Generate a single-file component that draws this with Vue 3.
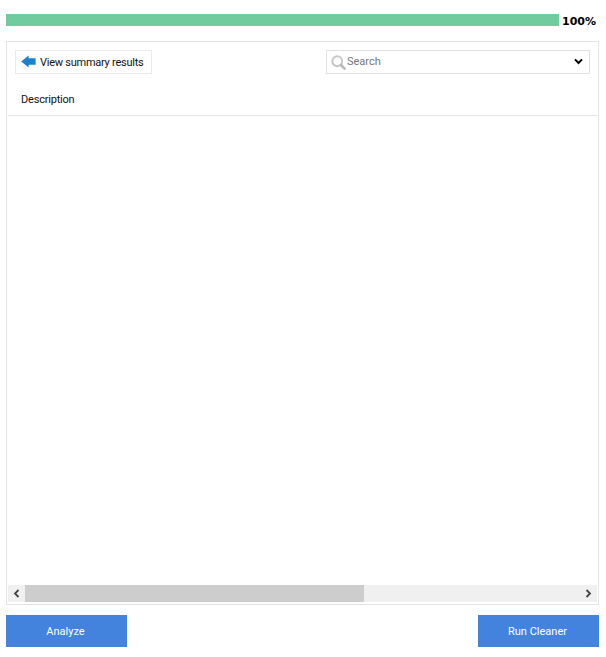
<script setup>
</script>

<template>
  <div class="page">
    <div class="progress-row">
      <div class="progress-bar"></div>
      <span class="progress-label">100%</span>
    </div>
    <div class="panel">
      <div class="toolbar">
        <button class="back-btn" type="button">
          <svg class="back-icon" width="15" height="13" viewBox="0 0 15 13">
            <path d="M0.2 6.5 L7.6 0.5 L7.6 3.2 L14.6 3.2 L14.6 9.8 L7.6 9.8 L7.6 12.5 Z" fill="#1b82cc" />
          </svg>
          <span>View summary results</span>
        </button>
        <div class="search">
          <svg class="search-icon" width="15" height="15" viewBox="0 0 15 15">
            <circle cx="6.2" cy="6.2" r="4.9" fill="none" stroke="#c8c8c8" stroke-width="2.1" />
            <path d="M10 10 L13.6 13.6" stroke="#b8b8b8" stroke-width="2.6" stroke-linecap="round" />
          </svg>
          <span class="search-text">Search</span>
          <svg class="chevron" width="9" height="7" viewBox="0 0 9 7">
            <path d="M1 1.4 L4.5 5 L8 1.4" fill="none" stroke="#000" stroke-width="2" />
          </svg>
        </div>
      </div>
      <div class="col-header">Description</div>
      <div class="list"></div>
      <div class="scrollbar">
        <div class="arrow">
          <svg width="7" height="9" viewBox="0 0 7 9"><path d="M5.5 1 L2 4.5 L5.5 8" fill="none" stroke="#444" stroke-width="1.8" /></svg>
        </div>
        <div class="track">
          <div class="thumb"></div>
        </div>
        <div class="arrow">
          <svg width="7" height="9" viewBox="0 0 7 9"><path d="M1.5 1 L5 4.5 L1.5 8" fill="none" stroke="#444" stroke-width="1.8" /></svg>
        </div>
      </div>
    </div>
    <div class="actions">
      <button class="action" type="button">Analyze</button>
      <button class="action" type="button">Run Cleaner</button>
    </div>
  </div>
</template>

<style scoped>
.page {
  width: 606px;
  height: 657px;
  box-sizing: border-box;
  padding: 14px 7px 10px 6px;
  display: flex;
  flex-direction: column;
  background: #fff;
  font-family: Roboto, "Liberation Sans", sans-serif;
  font-size: 11px;
  color: #111;
}
.progress-row {
  display: flex;
  align-items: center;
  height: 12px;
  gap: 3px;
}
.progress-bar {
  width: 553px;
  height: 12px;
  background: #70cc9e;
}
.progress-label {
  font-family: "DejaVu Sans", sans-serif;
  font-weight: 700;
  font-size: 11px;
  color: #000;
  white-space: nowrap;
  padding-top: 2px;
}
.panel {
  margin-top: 15px;
  height: 564px;
  box-sizing: border-box;
  border: 1px solid #e3e3e3;
  padding: 1px 1px 2px;
  display: flex;
  flex-direction: column;
}
.toolbar {
  display: flex;
  justify-content: space-between;
  align-items: flex-start;
  padding: 7px 7px 0 7px;
}
.back-btn {
  width: 137px;
  height: 24px;
  box-sizing: border-box;
  border: 1px solid #eaeaea;
  background: #fff;
  padding: 0 0 0 5px;
  display: flex;
  align-items: center;
  gap: 4px;
  font: inherit;
  letter-spacing: -0.25px;
  color: #111;
  white-space: nowrap;
}
.back-icon {
  flex: none;
  margin-bottom: 1px;
}
.search {
  width: 264px;
  height: 24px;
  box-sizing: border-box;
  border: 1px solid #e0e0e0;
  display: flex;
  align-items: center;
  padding: 0 6px 0 4px;
  color: #777;
}
.search-icon { flex: none; }
.search-text {
  margin-left: 1px;
  flex: 1;
  padding-bottom: 2px;
}
.chevron {
  flex: none;
  margin-bottom: 1px;
}
.col-header {
  height: 42px;
  box-sizing: border-box;
  padding: 9px 0 0 13px;
  display: flex;
  align-items: center;
  border-bottom: 1px solid #e3e3e3;
  letter-spacing: -0.2px;
}
.list { flex: 1; }
.scrollbar {
  height: 17px;
  display: flex;
  background: #f0f0f0;
}
.arrow {
  width: 17px;
  flex: none;
  display: flex;
  align-items: center;
  justify-content: center;
}
.track {
  flex: 1;
  display: flex;
}
.thumb {
  width: 339px;
  background: #cdcdcd;
}
.actions {
  margin-top: 10px;
  display: flex;
  justify-content: space-between;
}
.action {
  width: 121px;
  height: 32px;
  border: 0;
  padding: 1px 2px 0 0;
  background: #4383dd;
  color: #fff;
  font: inherit;
}
</style>
